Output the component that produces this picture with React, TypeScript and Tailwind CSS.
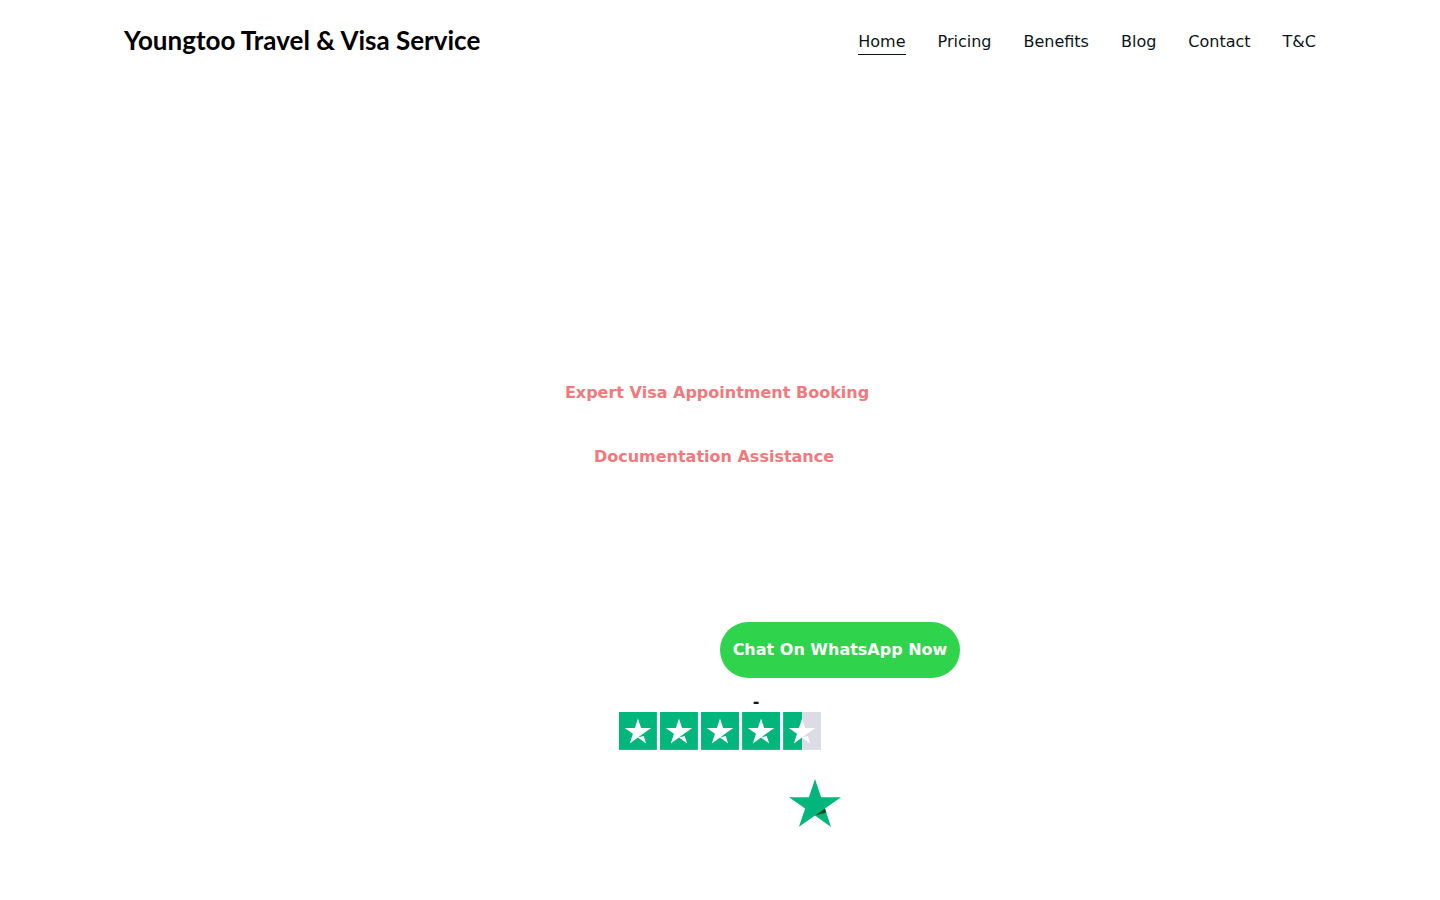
const NAV_LINKS = [
  { label: 'Home', href: '#home', active: true },
  { label: 'Pricing', href: '#pricing' },
  { label: 'Benefits', href: '#benefits' },
  { label: 'Blog', href: '#blog' },
  { label: 'Contact', href: '#contact' },
  { label: 'T&C', href: '#terms' },
]

const STAR_BODY =
  'M48 64.7 62.6 61l6.1 18.8L48 64.7zm33.6-24.3H55.9L48 16.2l-7.9 24.2H14.4l20.8 15-7.9 24.2 20.8-15 12.8-9.2 20.7-15z'

/** Rating strip: four full tiles and one half-filled tile */
function RatingStars() {
  return (
    <svg viewBox="0 0 512 96" className="w-[202px]" role="img" aria-label="Rated 4.5 out of 5">
      {[0, 104, 208, 312].map((x) => (
        <rect key={x} x={x} width="96" height="96" fill="#00b67a" />
      ))}
      <rect x="416" width="48" height="96" fill="#00b67a" />
      <rect x="464" width="48" height="96" fill="#dcdce6" />
      {[0, 104, 208, 312, 416].map((x) => (
        <path key={x} d={STAR_BODY} transform={`translate(${x} 0)`} fill="#fff" />
      ))}
    </svg>
  )
}

function BrandStar() {
  return (
    <svg viewBox="14.4 16.2 67.2 63.6" className="h-12 w-[52px]" preserveAspectRatio="none" aria-hidden="true">
      <path d="M81.6 40.4H55.9L48 16.2l-7.9 24.2H14.4l20.8 15-7.9 24.2L48 64.7l20.7 15.1-7.9-24.4z" fill="#00b67a" />
      <path d="M62.6 61 60.8 55.4 48 64.7z" fill="#005128" />
    </svg>
  )
}

function Header() {
  return (
    <header className="mx-auto flex w-full max-w-[1224px] items-center justify-between px-4 py-5">
      <a href="#home" className="font-['Lato',sans-serif] text-[26px] leading-10 font-bold text-black">
        Youngtoo Travel &amp; Visa Service
      </a>
      <nav className="flex gap-8">
        {NAV_LINKS.map((link) => (
          <a
            key={link.label}
            href={link.href}
            aria-current={link.active ? 'page' : undefined}
            className={`border-b pt-1 leading-6 ${link.active ? 'border-[#0d141a]' : 'border-transparent'}`}
          >
            {link.label}
          </a>
        ))}
      </nav>
    </header>
  )
}

export default function App() {
  return (
    <div className="min-h-screen bg-white font-['DejaVu_Sans',sans-serif] text-base text-[#0d141a]">
      <Header />
      <main className="mx-auto flex w-full max-w-[480px] flex-col items-center pt-[297px]">
        <div className="flex flex-col items-center gap-8 font-bold leading-8 text-[#ef7a7d]">
          <p className="pr-1.5">Expert Visa Appointment Booking</p>
          <p className="pr-3">Documentation Assistance</p>
        </div>

        <button
          type="button"
          className="mt-[149px] h-14 w-60 self-end rounded-full bg-[#2fd34c] font-bold whitespace-nowrap text-white"
        >
          Chat On WhatsApp Now
        </button>

        <p className="mt-3.5 pl-18 font-bold leading-5">-</p>
        <RatingStars />
        <div className="mt-[29px] self-end pr-[119px]">
          <BrandStar />
        </div>
      </main>
    </div>
  )
}
